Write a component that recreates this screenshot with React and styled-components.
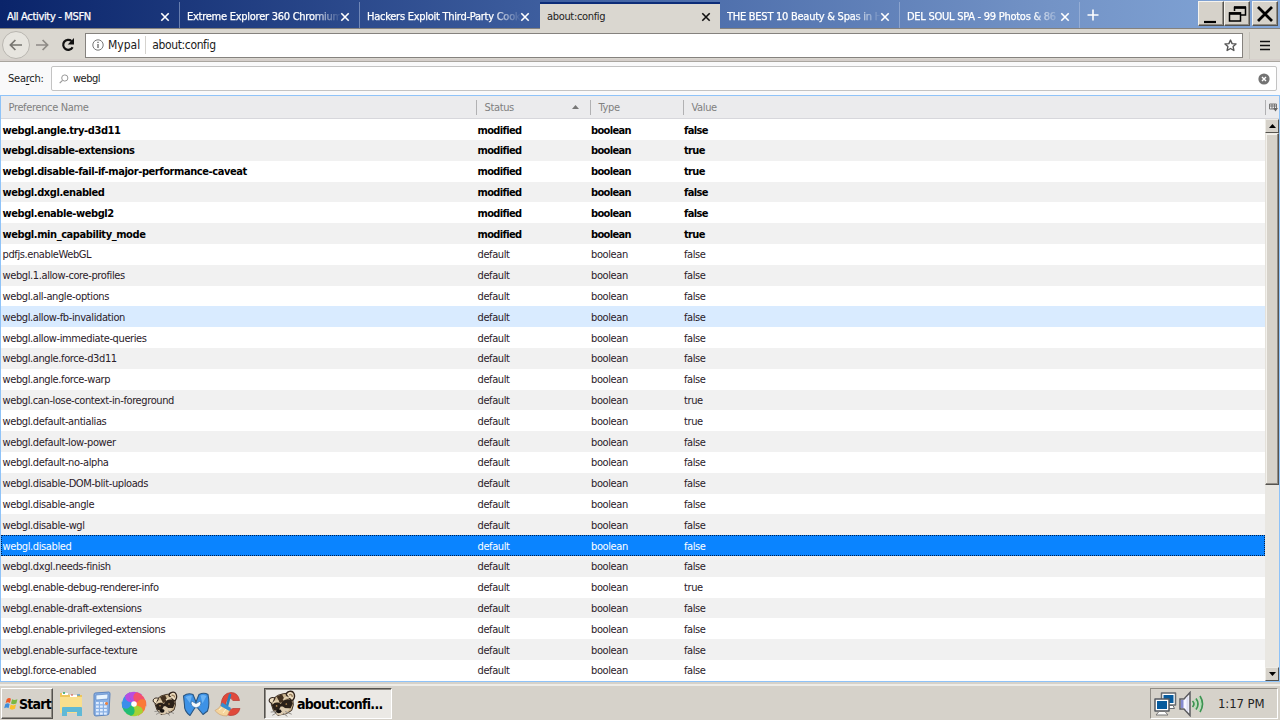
import React from "react";
import styled, { createGlobalStyle, css } from "styled-components";

const Global = createGlobalStyle`
  *{box-sizing:border-box}
  html,body{margin:0;padding:0;overflow:hidden}
  body{font-family:"DejaVu Sans Condensed","DejaVu Sans",sans-serif;font-stretch:condensed;font-size:11px;color:#1a1a1a}
  svg{display:block;flex:none}
`;
const Desktop = styled.div`
  width:1280px;height:720px;display:flex;flex-direction:column;background:#d6d2ca;overflow:hidden;
`;
const TabStrip = styled.header`
  height:29px;flex:none;display:flex;align-items:stretch;
  background:linear-gradient(90deg,#0a246a 0%,#4364a4 47%,#7393c6 82%,#82a6d8 100%);
  border-bottom:1px solid #85827e;position:relative;
`;
const Tab = styled.div`
  width:180px;flex:none;display:flex;align-items:center;padding:4px 9px 0 7px;color:#fff;
  border-right:1px solid ${(p) => (p.$noLine ? "transparent" : "rgba(180,195,225,.5)")};
  margin-top:2px;
  ${(p) => p.$active && css`
    height:31px;background:#dad7d0;color:#222;border-top:2px solid #0c2c78;border-right:0;z-index:1;padding-top:0;padding-bottom:3px;
  `}
`;
const TabTitle = styled.span`
  flex:1;overflow:hidden;white-space:nowrap;letter-spacing:${(p) => (p.$fade ? "-.26px" : "-.33px")};line-height:16px;font-size:11px;
  -webkit-text-stroke:${(p) => (p.$active ? "0" : ".25px #fff")};
  ${(p) => p.$fade && css`mask-image:linear-gradient(90deg,#000 82%,transparent 101%);`}
`;
const NewTab = styled.div`padding:9px 0 0 7px;`;
const WindowButtons = styled.div`
  margin-left:auto;display:flex;padding:1px 2px 0 0;
`;
const WinButton = styled.div`
  width:26px;height:25px;background:#d6d2ca;border:1px solid;border-color:#f5f3ee #55534f #55534f #f5f3ee;
  box-shadow:inset -1px -1px #918d86;display:grid;place-items:center;margin-left:${(p) => p.$gap || 0}px;
`;
const Toolbar = styled.div`
  height:33px;flex:none;background:#dad7d0;display:flex;align-items:center;border-bottom:1px solid #aaa6a0;
  padding:0 10px 0 2px;box-shadow:inset 0 -2px #d5cfcb;
`;
const BackButton = styled.div`
  width:28px;height:28px;border:1px solid #b9b6b0;border-radius:50%;background:#e7e5df;display:grid;place-items:center;
`;
const NavIcon = styled.div`margin-left:${(p) => p.$gap}px;`;
const UrlBar = styled.div`
  width:1158px;height:25px;margin-left:9px;border:1px solid #85827e;background:#fff;display:flex;align-items:center;
  padding:0 5px 0 6px;font-size:12px;
`;
const Identity = styled.span`
  margin-left:4px;padding-right:5px;border-right:1px solid #d5d3cf;line-height:18px;
`;
const Address = styled.span`margin-left:6px;flex:1;letter-spacing:-.36px;`;
const MenuButton = styled.div`
  margin-left:6px;padding-left:10px;height:27px;border-left:1px solid #c7c4bc;display:flex;align-items:center;
`;
const SearchRow = styled.div`
  height:33px;flex:none;background:#f9f9fa;display:flex;align-items:center;padding:0 3px 0 8px;
`;
const SearchLabel = styled.label`width:43px;letter-spacing:-.25px;u{text-underline-offset:2px}`;
const SearchBox = styled.div`
  flex:1;height:25px;border:1px solid #c3c3c3;border-radius:2px;background:#fff;display:flex;align-items:center;padding:0 6px 0 7px;
  span{flex:1;margin-left:4px;letter-spacing:-.5px}
`;
const Tree = styled.main`
  height:587px;flex:none;border:1px solid #8fc3f8;display:flex;flex-direction:column;background:#fff;overflow:hidden;
`;
const TreeHead = styled.div`
  height:23.3px;flex:none;background:#ebebed;border-bottom:1px solid #d7d7dc;display:flex;align-items:center;color:#808080;letter-spacing:-.36px;
`;
const HeadCell = styled.div`
  width:${(p) => p.$w}px;height:15px;display:flex;align-items:center;justify-content:space-between;
  padding:0 11px 0 7.5px;border-right:${(p) => (p.$last ? 0 : "1px solid #b1b1b3")};
  ${(p) => p.$last && css`flex:1;`}
`;
const Picker = styled.div`width:14px;height:15px;border-left:1px solid #b1b1b3;padding:3px 0 0 3px;`;
const TreeBody = styled.div`flex:1;display:flex;min-height:0;`;
const Rows = styled.div`flex:1;overflow:hidden;`;
const Row = styled.div`
  height:20.81px;display:grid;grid-template-columns:475px 113.5px 93px 1fr;align-items:center;padding:1px 0 0 1.5px;white-space:nowrap;
  letter-spacing:-.4px;color:#2a2028;background:${(p) => (p.$odd ? "#f1f1f1" : "#fff")};
  ${(p) => p.$bold && css`font-weight:700;color:#000;letter-spacing:-.65px;`}
  ${(p) => p.$hover && css`background:#d9ebff;`}
  ${(p) => p.$selected && css`background:#0a84ff;color:#fff;outline:1px dotted #00204e;outline-offset:-1px;`}
`;
const PrefName = styled.span`letter-spacing:${(p) => (p.$bold ? "-.42px" : "-.39px")};`;
const ScrollTrack = styled.div`
  width:14px;background:#e9e7e2;display:flex;flex-direction:column;
`;
const ScrollButton = styled.div`
  height:14px;flex:none;background:#d6d2ca;border:1px solid;border-color:#eeece6 #55534f #55534f #eeece6;display:grid;place-items:center;
`;
const Thumb = styled.div`
  height:352px;background:#d6d2ca;border:1px solid;border-color:#eeece6 #55534f #55534f #e4e1da;
  box-shadow:inset -1px -1px #918d86,inset 1px 1px #f3f1ec;margin-bottom:auto;
`;
const Taskbar = styled.footer`
  flex:1;margin-top:2px;border-top:2px solid #efede8;background:#d6d2ca;display:flex;padding:2px 0 0 1px;
`;
const StartButton = styled.div`
  width:52px;height:31px;border:1px solid;border-color:#fff #55534f #55534f #fff;box-shadow:inset -1px -1px #918d86;
  display:flex;align-items:center;font-weight:700;font-size:14px;color:#000;letter-spacing:-.75px;padding-left:1px;white-space:nowrap;
`;
const QuickLaunch = styled.div`
  display:flex;align-items:center;gap:4px;height:31px;margin-left:5px;
`;
const TaskButton = styled.div`
  width:128px;height:31px;margin-left:22px;border:1px solid;border-color:#55534f #fff #fff #55534f;
  box-shadow:inset 1px 1px #918d86;background:#ebe9e5;display:flex;align-items:center;padding-left:3px;
  font-weight:700;font-size:14px;color:#000;gap:1px;letter-spacing:-.7px;white-space:nowrap;
`;
const Tray = styled.div`
  margin-left:auto;margin-right:2px;width:128px;height:31px;border:1px solid;border-color:#918d86 #fff #fff #918d86;
  display:flex;align-items:center;padding-left:2px;
  span{margin-left:13px;font-size:13px;letter-spacing:-.1px;white-space:nowrap;color:#222}
`;

const Close = ({ color = "#fff" }) => (
  <svg width="10" height="10" viewBox="0 0 10 10"><path d="M1.3 1.3l7.4 7.4M8.7 1.3l-7.4 7.4" stroke={color} strokeWidth="1.6" /></svg>
);
const Arrow = ({ flip, color }) => (
  <svg width="14" height="12" viewBox="0 0 14 12">
    <path transform={flip ? "translate(14 0) scale(-1 1)" : undefined} d="M13 6H1.5M6.4 1L1.4 6l5 5" fill="none" stroke={color} strokeWidth="1.7" />
  </svg>
);
const Raccoon = ({ size = 26 }) => (
  <svg width={size} height={size} viewBox="0 0 26 26">
    <path d="M5 8L9 5l5-1.5 4-.5 5 5 .5 6-1.5 5-5 3-8 1.5L5 19 3 13z" fill="#cdb792" stroke="#3a2a1e" strokeWidth=".9" />
    <path d="M17 4.5C17 1 22.5 0 24 3s0 6.500-2 7z" fill="#efdfc2" stroke="#30231b" strokeWidth="1.3" />
    <path d="M19.5 4.5q3-1 3 2" fill="none" stroke="#9b8261" strokeWidth="1.4" />
    <path d="M1.500 11C0 8 3.500 6 6.500 7.500L4 13z" fill="#efdfc2" stroke="#30231b" />
    <path d="M3.500 14Q8 10 12 13l1-2q4-4 8.500-1.500l1.500 3-2 4.500-5 0-2.500-2-3 4-5 0z" fill="#2a2018" />
    <path d="M8 6l3 6 3-1 1-3-2-4z" fill="#42301f" />
    <path d="M4 12.500q3-3.500 6-2M14 9q3-3.500 7-2" fill="none" stroke="#e5d5b8" strokeWidth="1.200" />
    <path d="M12 15l4 2 4 .5-3 4-6 2-4-1 3-4z" fill="#dccbb0" />
    <ellipse cx="10" cy="19.800" rx="2.500" ry="1.900" fill="#15110f" />
    <circle cx="8" cy="14.800" r=".8" fill="#b88b53" /><circle cx="17" cy="13" r=".8" fill="#b88b53" />
    <path d="M2.500 20.500l5-.5M4 23.500l4.500-2.500M16 20l6 2.500M14 21.500l4 3" stroke="#8d8a86" strokeWidth=".9" />
  </svg>
);
const StartFlag = () => (
  <svg width="16" height="15" viewBox="0 0 14 14">
    <path d="M3 3q2-2 4-.5L6 6.500Q4 5 2 6.500z" fill="#ef5a28" /><path d="M8 3q2 1.500 5 0L12 7Q9 8.500 7 7z" fill="#79b843" />
    <path d="M1.700 7.500Q4 6 5.700 7.500l-1 4Q3 10 .6 11.500z" fill="#3f8edb" /><path d="M6.700 8q2 1.500 5 0l-1 4q-3 1.500-5 0z" fill="#fbc02d" />
  </svg>
);
const Folder = () => (
  <svg width="26" height="26" viewBox="0 0 26 26">
    <path d="M2 2h7l2 2h13v18H2z" fill="#edc65c" /><path d="M4 3h6M12 5h7" stroke="#fff" strokeWidth="2" />
    <path d="M5 2h2" stroke="#26a269" strokeWidth="1.500" /><path d="M13 4h2" stroke="#d54b3d" strokeWidth="1.200" /><path d="M19 4h3" stroke="#4594cd" strokeWidth="1.200" />
    <path d="M2 6h22v16H2z" fill="#f9df8d" /><path d="M4 25v-8q0-1 1-1h18q1 0 1 1v8h-5v-4H9v4z" fill="#60b9d6" />
  </svg>
);
const Calculator = () => (
  <svg width="28" height="26" viewBox="0 0 28 26">
    <path d="M7 2l14-1q1 0 1 2l-1 19q0 2-2 2l-11 1q-2 0-2-2L6 4q0-2 1-2z" fill="#8bb1e4" stroke="#5d85bf" />
    <path d="M8 4l12-1-.3 5L8 9z" fill="#e9f5ff" stroke="#4b7bc0" strokeWidth=".6" />
    {[11, 14.5, 18, 21.5].map((y) => [8, 12, 16].map((x) => <rect key={x + "-" + y} x={x} y={y} width="2.800" height="2.200" fill="#e0edff" />))}
    <path d="M18.500 11v3M17 12.500h3" stroke="#ea8445" strokeWidth="1.700" />
  </svg>
);
const Pinwheel = () => (
  <svg width="28" height="28" viewBox="-14 -14 28 28">
    {["#b94de0", "#f4506d", "#fb7a35", "#a5d234", "#22bd74", "#3b8eea"].map((c, i) => (
      <path key={c} transform={`rotate(${i * 60 - 15})`} d="M0-2C-6-3-8-7-6.200-10.500Q3-15 10.500-7Q4-8 2-1Z" fill={c} />
    ))}
    <path transform="rotate(-15)" d="M0-2C-6-3-8-7-6.200-10.500Q-3-12.500 0-12.300Q-5-6 0-2Z" fill="#b94de0" />
    <circle r="2.800" fill="#fff" />
  </svg>
);
const BlueWing = () => (
  <svg width="28" height="28" viewBox="0 0 28 28">
    <path d="M1.500 6Q6 2.500 11 4.500L14 12l0 4-6 9.500Q2 21 2.500 15z" fill="#3d92e6" stroke="#2b5680" strokeWidth="1.100" strokeLinejoin="round" />
    <path d="M17 4.500Q22 2 26 4.500Q28 15 25.500 21L21 24.500 14 16v-4z" fill="#3d92e6" stroke="#2b5680" strokeWidth="1.100" strokeLinejoin="round" />
    <path d="M3.500 7q3-2 6.500-1.500L8 13zM24.500 6q-3-1.500-6-.5l2 8z" fill="#6cb3f3" />
    <path d="M9.500 11l4.500 2.500 4.500-2.500q2 5-4.500 7-6.500-2-4.500-7z" fill="#f5f8fb" stroke="#3873ad" strokeWidth=".8" />
  </svg>
);
const Cleaner = () => (
  <svg width="28" height="28" viewBox="0 0 28 28">
    <path d="M25.500 10.500h-6.500Q17 7 14 9q-4 4-1 9 3 3 6 .5h7q-2 7.500-10 7-9-1-9-11Q8 3 17 2.500q7 0 8.500 8z" fill="#e0493b" stroke="#b43a32" strokeWidth=".7" />
    <path d="M16 5l-3 11" stroke="#2782bf" strokeWidth="2.600" strokeLinecap="round" />
    <path d="M7 15l9 5-3 6Q5 26 1 20.500q4-1.500 6-5.500z" fill="#f5d49c" stroke="#c79b68" strokeWidth=".6" />
    <path d="M8 12.500l9 5.500-1.500 3-9-5z" fill="#368ed0" /><path d="M5 20l3-2.500M9 23l3-4" stroke="#fff4d0" />
  </svg>
);
const Network = () => (
  <svg width="25" height="26" viewBox="0 0 25 26">
    <path d="M8.500 2h14v12h-14z" fill="#fff" stroke="#666b70" strokeWidth="1.500" strokeLinejoin="round" /><path d="M10.500 4h10v8h-10z" fill="#075b9d" />
    <path d="M16 14.500h4l1.500 3H16z" fill="#fff" stroke="#666b70" />
    <path d="M2 8h14v12H2z" fill="#fff" stroke="#555a60" strokeWidth="1.500" strokeLinejoin="round" /><path d="M4 10h10v8H4z" fill="#075b9d" />
    <path d="M6 20.500h6l3 3.500H3z" fill="#fff" stroke="#777" />
  </svg>
);
const Speaker = () => (
  <svg width="27" height="26" viewBox="0 0 27 26">
    <path d="M2 8h4l6-6.500v23L6 18H2z" fill="#f7f7ff" stroke="#5c5c60" strokeWidth="1.500" /><path d="M3 9h2.500v8H3z" fill="#858bd1" /><path d="M9.500 6v14" stroke="#dcdef2" strokeWidth="2" />
    <g fill="none" stroke="#3c9652" strokeWidth="1.700"><path d="M14.500 10q3 3 0 6" /><path d="M18 7.500q4 5.500 0 11" /><path d="M22 5q5 8 0 16" /></g>
    <g fill="none" stroke="#a9e6b0"><path d="M16.500 8.500q3.500 4.500 0 9" /><path d="M20.500 6q4.500 7 0 14" /></g>
  </svg>
);

const tabs = [
  ["All Activity - MSFN"],
  ["Extreme Explorer 360 Chromium", true],
  ["Hackers Exploit Third-Party Cook", true],
  ["about:config"],
  ["THE BEST 10 Beauty & Spas in H", true],
  ["DEL SOUL SPA - 99 Photos & 86", true],
];
const modified = [
  ["webgl.angle.try-d3d11", "false"], ["webgl.disable-extensions", "true"],
  ["webgl.disable-fail-if-major-performance-caveat", "true"], ["webgl.dxgl.enabled", "false"],
  ["webgl.enable-webgl2", "false"], ["webgl.min_capability_mode", "true"],
];
const defaults = [
  ["pdfjs.enableWebGL", "false"], ["webgl.1.allow-core-profiles", "false"], ["webgl.all-angle-options", "false"],
  ["webgl.allow-fb-invalidation", "false"], ["webgl.allow-immediate-queries", "false"], ["webgl.angle.force-d3d11", "false"],
  ["webgl.angle.force-warp", "false"], ["webgl.can-lose-context-in-foreground", "true"], ["webgl.default-antialias", "true"],
  ["webgl.default-low-power", "false"], ["webgl.default-no-alpha", "false"], ["webgl.disable-DOM-blit-uploads", "false"],
  ["webgl.disable-angle", "false"], ["webgl.disable-wgl", "false"], ["webgl.disabled", "false"],
  ["webgl.dxgl.needs-finish", "false"], ["webgl.enable-debug-renderer-info", "true"], ["webgl.enable-draft-extensions", "false"],
  ["webgl.enable-privileged-extensions", "false"], ["webgl.enable-surface-texture", "false"], ["webgl.force-enabled", "false"],
];
const prefs = [
  ...modified.map(([name, value]) => ({ name, value, bold: true })),
  ...defaults.map(([name, value]) => ({ name, value })),
];

export default function App() {
  return (
    <Desktop>
      <Global />
      <TabStrip>
        {tabs.map(([title, fade], i) => (
          <Tab key={title} $active={i === 3} $noLine={i === 2}>
            <TabTitle $fade={fade} $active={i === 3}>{title}</TabTitle>
            <Close color={i === 3 ? "#111" : "#fff"} />
          </Tab>
        ))}
        <NewTab><svg width="12" height="12"><path d="M6 .5v11M.5 6h11" stroke="#fff" strokeWidth="1.600" /></svg></NewTab>
        <WindowButtons>
          <WinButton><svg width="22" height="22"><path d="M4 19h12" stroke="#000" strokeWidth="2.200" /></svg></WinButton>
          <WinButton>
            <svg width="20" height="20" fill="none" stroke="#000">
              <path d="M7.500 7V3.500h11V11H14" strokeWidth="1.500" /><path d="M7 3.500h12" strokeWidth="2.600" />
              <path d="M2.500 9v8h11V9z" strokeWidth="1.500" /><path d="M2 9.500h12" strokeWidth="2.600" />
            </svg>
          </WinButton>
          <WinButton $gap={2}><svg width="20" height="20"><path d="M3 3l14 14M17 3L3 17" stroke="#000" strokeWidth="2.800" /></svg></WinButton>
        </WindowButtons>
      </TabStrip>
      <Toolbar>
        <BackButton><Arrow color="#777570" /></BackButton>
        <NavIcon $gap={5}><Arrow flip color="#8e8b86" /></NavIcon>
        <NavIcon $gap={12}>
          <svg width="15" height="14" viewBox="0 0 15 14">
            <path d="M11.600 9.200A5 5 0 1 1 10.500 3" fill="none" stroke="#111" strokeWidth="2.200" /><path d="M13 0v6.500H6.700z" fill="#111" />
          </svg>
        </NavIcon>
        <UrlBar>
          <svg width="12" height="12" viewBox="0 0 12 12"><circle cx="6" cy="6" r="5.200" fill="none" stroke="#777" /><path d="M6 5v4M6 2.700v1.300" stroke="#666" strokeWidth="1.300" /></svg>
          <Identity>Mypal</Identity><Address>about:config</Address>
          <svg width="13" height="13" viewBox="0 0 13 13"><path d="M6.500 1.100l1.600 3.500 3.900.4-2.900 2.600.8 3.900-3.400-2-3.400 2 .8-3.900L1 5l3.900-.4z" fill="none" stroke="#555" strokeWidth="1.400" strokeLinejoin="round" /></svg>
        </UrlBar>
        <MenuButton><svg width="10" height="11"><path d="M0 1.500h10M0 5.500h10M0 9.500h10" stroke="#111" strokeWidth="1.600" /></svg></MenuButton>
      </Toolbar>
      <SearchRow>
        <SearchLabel>Sea<u>r</u>ch:</SearchLabel>
        <SearchBox>
          <svg width="10" height="10" viewBox="0 0 10 10"><circle cx="5.800" cy="4" r="3.100" fill="none" stroke="#999" /><path d="M3.500 6.300L.7 9.100" stroke="#999" strokeWidth="1.200" /></svg>
          <span>webgl</span>
          <svg width="12" height="12"><circle cx="6" cy="6" r="5.600" fill="#737373" /><path d="M4 4l4 4M8 4L4 8" stroke="#fff" strokeWidth="1.400" /></svg>
        </SearchBox>
      </SearchRow>
      <Tree>
        <TreeHead>
          <HeadCell $w={476}>Preference Name</HeadCell>
          <HeadCell $w={114}>Status<svg width="7" height="4"><path d="M3.500 0L7 4H0z" fill="#777" /></svg></HeadCell>
          <HeadCell $w={93}>Type</HeadCell>
          <HeadCell $last>Value</HeadCell>
          <Picker><svg width="9" height="9"><path d="M.5 1h7v5h-7zM.5 3h7M3 1v5M5.500 1v4" fill="none" stroke="#777" /><path d="M4 5h5L6.500 8.500z" fill="#666" /></svg></Picker>
        </TreeHead>
        <TreeBody>
          <Rows>
            {prefs.map((p, i) => (
              <Row key={p.name} $odd={i % 2 === 1} $bold={p.bold} $hover={i === 9} $selected={i === 20}>
                <PrefName $bold={p.bold}>{p.name}</PrefName><span>{p.bold ? "modified" : "default"}</span><span>boolean</span><span>{p.value}</span>
              </Row>
            ))}
          </Rows>
          <ScrollTrack>
            <ScrollButton><svg width="7" height="4"><path d="M3.500 0L7 4H0z" /></svg></ScrollButton>
            <Thumb />
            <ScrollButton><svg width="7" height="4"><path d="M0 0h7L3.500 4z" /></svg></ScrollButton>
          </ScrollTrack>
        </TreeBody>
      </Tree>
      <Taskbar>
        <StartButton><StartFlag />Start</StartButton>
        <QuickLaunch><Folder /><Calculator /><Pinwheel /><Raccoon /><BlueWing /><Cleaner /></QuickLaunch>
        <TaskButton><Raccoon size={28} />about:confi...</TaskButton>
        <Tray><Network /><Speaker /><span>1:17 PM</span></Tray>
      </Taskbar>
    </Desktop>
  );
}
